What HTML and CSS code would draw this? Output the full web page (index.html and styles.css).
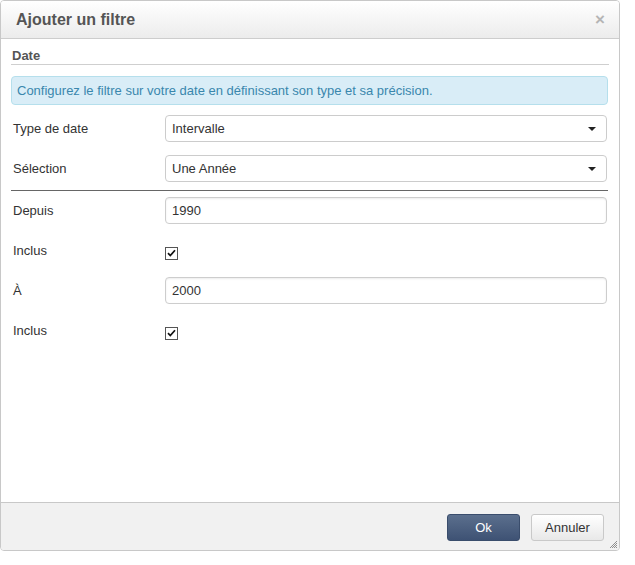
FILE: index.html
```html
<!DOCTYPE html>
<html lang="fr">
<head>
<meta charset="utf-8">
<title>Ajouter un filtre</title>
<link rel="stylesheet" href="styles.css">
</head>
<body>
<div class="dialog">
  <div class="dlg-header">
    <span class="dlg-title">Ajouter un filtre</span>
    <span class="dlg-close">×</span>
  </div>
  <div class="dlg-body">
    <div class="legend">Date</div>
    <div class="info">Configurez le filtre sur votre date en définissant son type et sa précision.</div>
    <div class="row first">
      <label class="lbl">Type de date</label>
      <div class="select"><span>Intervalle</span><span class="caret"></span></div>
    </div>
    <div class="row">
      <label class="lbl">Sélection</label>
      <div class="select"><span>Une Année</span><span class="caret"></span></div>
    </div>
    <div class="sep"></div>
    <div class="row tight">
      <label class="lbl">Depuis</label>
      <div class="input">1990</div>
    </div>
    <div class="row">
      <label class="lbl">Inclus</label>
      <div class="check-wrap"><span class="check"><svg width="9" height="8" viewBox="0 0 9 8"><path d="M1 4.2 L3.3 6.6 L8 1.2" fill="none" stroke="#111" stroke-width="1.7"/></svg></span></div>
    </div>
    <div class="row">
      <label class="lbl">À</label>
      <div class="input">2000</div>
    </div>
    <div class="row">
      <label class="lbl">Inclus</label>
      <div class="check-wrap"><span class="check"><svg width="9" height="8" viewBox="0 0 9 8"><path d="M1 4.2 L3.3 6.6 L8 1.2" fill="none" stroke="#111" stroke-width="1.7"/></svg></span></div>
    </div>
  </div>
  <div class="dlg-footer">
    <button class="btn btn-primary">Ok</button>
    <button class="btn btn-default">Annuler</button>
    <span class="grip"><svg width="7" height="7" viewBox="0 0 7 7"><path d="M7 0 L0 7 M7 2 L2 7 M7 4 L4 7 M7 6 L6 7" stroke="#777" stroke-width="0.8"/></svg></span>
  </div>
</div>
</body>
</html>
```
FILE: styles.css
```css
* { box-sizing: border-box; }
html, body { margin: 0; padding: 0; background: #fff; }
body {
  font-family: "Liberation Sans", Arial, sans-serif;
  font-size: 13px;
  color: #333;
}
.dialog {
  width: 620px;
  height: 551px;
  border: 1px solid #c8c8c8;
  border-radius: 4px;
  display: flex;
  flex-direction: column;
  background: #fff;
  overflow: hidden;
}
.dlg-header {
  height: 38px;
  flex: none;
  border-bottom: 1px solid #cdcdcd;
  background: linear-gradient(#ffffff, #ececec);
  display: flex;
  align-items: center;
  justify-content: space-between;
  padding: 0 14px 0 15px;
}
.dlg-title {
  font-size: 16px;
  font-weight: bold;
  color: #555;
}
.dlg-close {
  font-size: 17px;
  font-weight: bold;
  color: #b5b5b5;
  line-height: 1;
}
.dlg-body {
  flex: 1;
  padding: 9px 10px 0 10px;
}
.legend {
  font-weight: bold;
  color: #555;
  line-height: 16px;
  padding-left: 1px;
  border-bottom: 1px solid #cfcfcf;
}
.info {
  margin-top: 11px;
  height: 29px;
  border: 1px solid #b5dfec;
  background: #d9edf7;
  border-radius: 4px;
  color: #3a87ad;
  display: flex;
  align-items: center;
  padding-left: 5px;
  margin-right: 1px;
}
.row {
  display: grid;
  grid-template-columns: 154px 442px;
  align-items: center;
  height: 27px;
  margin-top: 13px;
}
.row.first { margin-top: 10px; }
.row.tight { margin-top: 6px; }
.lbl { padding-left: 2px; color: #333; }
.select, .input {
  height: 27px;
  border: 1px solid #ccc;
  border-radius: 4px;
  background: #fff;
  display: flex;
  align-items: center;
  justify-content: space-between;
  padding: 0 10px 0 6px;
  color: #333;
}
.input {
  box-shadow: inset 0 1px 2px rgba(0,0,0,0.08);
  border-color: #cdcdcd;
}
.caret {
  width: 0;
  height: 0;
  border-left: 4px solid transparent;
  border-right: 4px solid transparent;
  border-top: 4px solid #222;
  margin-top: 1px;
}
.sep {
  height: 1px;
  background: #666;
  margin-top: 8px;
  margin-right: 1px;
}
.check-wrap { display: flex; align-items: center; padding-top: 5px; }
.check {
  width: 13px;
  height: 13px;
  border: 1px solid #555;
  background: #fff;
  display: flex;
  align-items: center;
  justify-content: center;
}
.dlg-footer {
  flex: none;
  height: 48px;
  border-top: 1px solid #c8c8c8;
  background: #f1f1f1;
  display: flex;
  justify-content: flex-end;
  align-items: center;
  gap: 11px;
  padding: 0 15px 0 0;
  position: relative;
}
.btn {
  width: 73px;
  height: 27px;
  border-radius: 3px;
  font-family: "Liberation Sans", Arial, sans-serif;
  font-size: 13px;
  cursor: pointer;
  margin-top: 2px;
}
.btn-primary {
  background: linear-gradient(#5b6f8d, #3e5274);
  border: 1px solid #3a4d6c;
  color: #fff;
}
.btn-default {
  background: linear-gradient(#ffffff, #e8e8e8);
  border: 1px solid #c9c9c9;
  color: #333;
}
.grip {
  position: absolute;
  right: 2px;
  bottom: 2px;
  line-height: 0;
}
```
